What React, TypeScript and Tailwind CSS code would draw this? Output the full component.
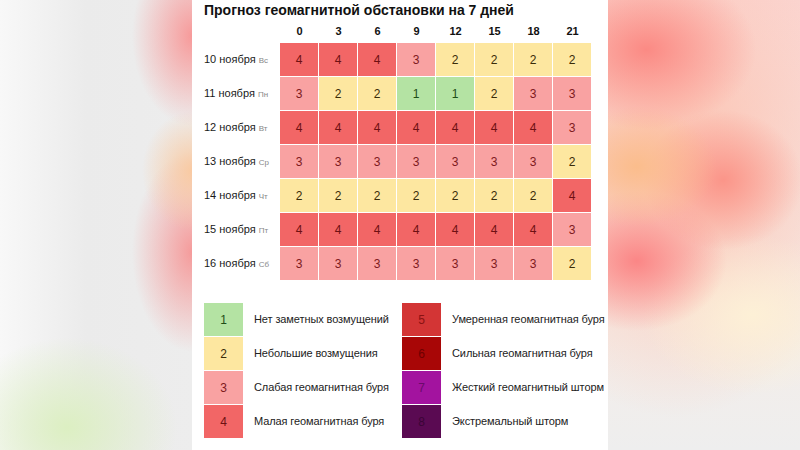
import React from 'react';

type Level = 1 | 2 | 3 | 4 | 5 | 6 | 7 | 8;

const hours = [0, 3, 6, 9, 12, 15, 18, 21];

const days: { date: string; wd: string; values: Level[] }[] = [
	{ date: '10 ноября', wd: 'Вс', values: [4, 4, 4, 3, 2, 2, 2, 2] },
	{ date: '11 ноября', wd: 'Пн', values: [3, 2, 2, 1, 1, 2, 3, 3] },
	{ date: '12 ноября', wd: 'Вт', values: [4, 4, 4, 4, 4, 4, 4, 3] },
	{ date: '13 ноября', wd: 'Ср', values: [3, 3, 3, 3, 3, 3, 3, 2] },
	{ date: '14 ноября', wd: 'Чт', values: [2, 2, 2, 2, 2, 2, 2, 4] },
	{ date: '15 ноября', wd: 'Пт', values: [4, 4, 4, 4, 4, 4, 4, 3] },
	{ date: '16 ноября', wd: 'Сб', values: [3, 3, 3, 3, 3, 3, 3, 2] }
];

const levelStyle: Record<Level, string> = {
	1: 'bg-[#b4e3a3] text-[#1e4d16]',
	2: 'bg-[#fde7a0] text-[#3a2c08]',
	3: 'bg-[#f9a2a2] text-[#7e1a1d]',
	4: 'bg-[#f26666] text-[#6e1012]',
	5: 'bg-[#d33535] text-[#8a1212]',
	6: 'bg-[#a80606] text-[#6e0000]',
	7: 'bg-[#a3139f] text-[#6b0a6b]',
	8: 'bg-[#5a0a52] text-[#3a0436]'
};

const legend: { level: Level; label: string }[] = [
	{ level: 1, label: 'Нет заметных возмущений' },
	{ level: 2, label: 'Небольшие возмущения' },
	{ level: 3, label: 'Слабая геомагнитная буря' },
	{ level: 4, label: 'Малая геомагнитная буря' },
	{ level: 5, label: 'Умеренная геомагнитная буря' },
	{ level: 6, label: 'Сильная геомагнитная буря' },
	{ level: 7, label: 'Жесткий геомагнитный шторм' },
	{ level: 8, label: 'Экстремальный шторм' }
];

function LegendColumn({ items }: { items: typeof legend }) {
	return (
		<div className="flex flex-col gap-px shrink-0">
			{items.map((item) => (
				<div key={item.level} className="flex items-center h-[33px]">
					<div
						className={`w-[39px] h-[33px] shrink-0 flex items-center justify-center text-[12px] ${levelStyle[item.level]}`}
					>
						{item.level}
					</div>
					<span className="ml-[11px] text-[11px] tracking-[-0.1px] text-[#222] whitespace-nowrap">
						{item.label}
					</span>
				</div>
			))}
		</div>
	);
}

export default function App() {
	return (
		<div className="flex w-[800px] h-[450px] overflow-hidden font-['Liberation_Sans',sans-serif]">
			{/* blurred backdrop, left */}
			<div className="w-[192px] shrink-0 h-full bg-[#ececec] bg-[radial-gradient(60px_90px_at_100%_8%,#f79a9a,transparent),radial-gradient(50px_60px_at_100%_38%,#f9caa2,transparent),radial-gradient(60px_100px_at_100%_56%,#f59b9b,transparent),radial-gradient(110px_90px_at_35%_95%,#dcefc2,transparent),linear-gradient(to_right,#f8f8f8,#ebebeb_45%,#ededed)]" />

			{/* panel */}
			<div className="w-[416px] shrink-0 h-full bg-white pl-[12px] pr-[16px]">
				<div className="h-[20px] leading-[20px] text-[14px] font-bold text-[#111] whitespace-nowrap">
					Прогноз геомагнитной обстановки на 7 дней
				</div>

				<div className="flex h-[23px] items-center">
					<div className="w-[76px]" />
					{hours.map((h) => (
						<div key={h} className="w-[39px] text-center text-[11px] font-bold text-[#111]">
							{h}
						</div>
					))}
				</div>

				<div className="flex flex-col gap-px">
					{days.map((d) => (
						<div key={d.date} className="flex items-center h-[33px]">
							<div className="w-[76px] text-[11px] text-[#1a1a1a] whitespace-nowrap">
								{d.date} <span className="text-[8px] text-[#888]">{d.wd}</span>
							</div>
							<div className="flex gap-px">
								{d.values.map((v, i) => (
									<div
										key={i}
										className={`w-[38px] h-[33px] flex items-center justify-center text-[12px] ${levelStyle[v]}`}
									>
										{v}
									</div>
								))}
							</div>
						</div>
					))}
				</div>

				<div className="flex mt-[23px]">
					<div className="w-[198px] shrink-0">
						<LegendColumn items={legend.slice(0, 4)} />
					</div>
					<LegendColumn items={legend.slice(4)} />
				</div>
			</div>

			{/* blurred backdrop, right */}
			<div className="w-[192px] shrink-0 h-full bg-[#f1efed] bg-[radial-gradient(110px_80px_at_20%_11%,#fb8a84,transparent),radial-gradient(80px_60px_at_15%_37%,#fbbd8c,transparent),radial-gradient(80px_70px_at_60%_40%,#fb9589,transparent),radial-gradient(90px_70px_at_15%_58%,#fb8686,transparent),radial-gradient(110px_80px_at_75%_70%,#fdf0d6,transparent),radial-gradient(190px_260px_at_35%_35%,#fcc2b0,transparent),linear-gradient(to_bottom,#fbd6d2,#f5ede8_70%,#eeeeee)]" />
		</div>
	);
}
